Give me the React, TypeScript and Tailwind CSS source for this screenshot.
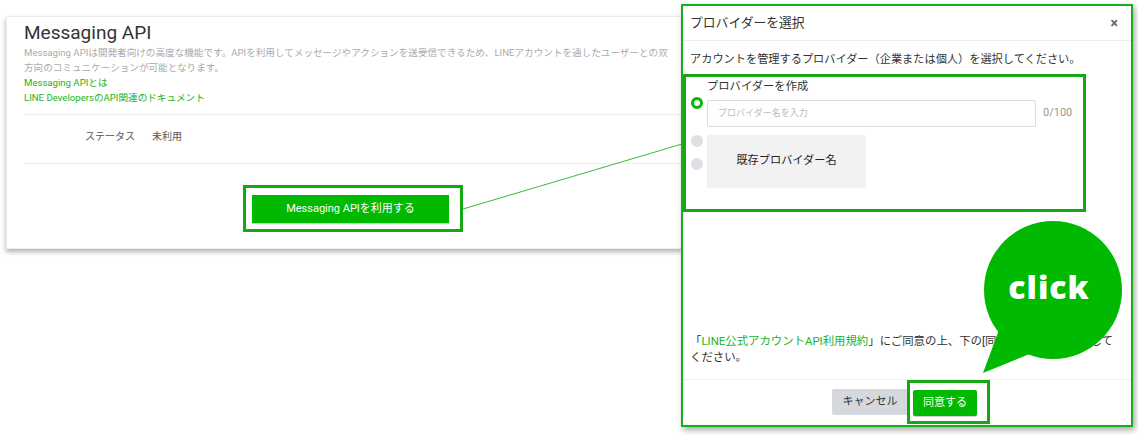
const green = 'bg-[#00b900]';

const MessagingCard = () => (
  <div className="ml-[6px] mt-[16px] h-[233px] w-[676px] border border-[#ececec] bg-white shadow-[0_3px_5px_rgba(0,0,0,0.3)]">
    <div className="pl-[17px] pt-[5px]">
      <h2 className="text-[19px] leading-[22px] text-[#333]">Messaging API</h2>
      <p className="mt-[1px] whitespace-nowrap text-[9.6px] leading-[15px] text-[#aaa]">
        Messaging APIは開発者向けの高度な機能です。APIを利用してメッセージやアクションを送受信できるため、LINEアカウントを通したユーザーとの双
        <br />
        方向のコミュニケーションが可能となります。
      </p>
      <div className="text-[9.6px] leading-[15px] text-[#22b322]">
        <div>Messaging APIとは</div>
        <div>LINE DevelopersのAPI関連のドキュメント</div>
      </div>
      <div className="mt-[9px] border-t border-[#eeeeee]">
        <div className="flex pb-[19px] pl-[61px] pt-[15px] text-[10px] leading-[14px] text-[#555]">
          <span className="w-[67px]">ステータス</span>
          <span>未利用</span>
        </div>
      </div>
      <div className="border-t border-[#eeeeee]">
        <div className="ml-[219px] mt-[21px] flex h-[47px] w-[220px] border-[3px] border-[#12a912] pl-[6px] pt-[7px]">
          <button className={`h-[28px] w-[197px] ${green} text-[11px] text-white shadow-[0_1px_1px_rgba(0,0,0,0.2)]`}>
            Messaging APIを利用する
          </button>
        </div>
      </div>
    </div>
  </div>
);

const Radio = ({ on }: { on?: boolean }) =>
  on ? (
    <span className="block h-[12px] w-[12px] rounded-full border-[3px] border-[#00b900] bg-white" />
  ) : (
    <span className="block h-[12px] w-[12px] rounded-full bg-[#dcdfe4]" />
  );

const ProviderModal = () => (
  <div className="absolute left-[681px] top-[4px] flex h-[423px] w-[452px] flex-col border-2 border-[#19ae19] bg-white shadow-[2px_3px_6px_rgba(0,0,0,0.35)]">
    <div className="flex h-[35px] items-center justify-between border-b border-[#eeeeee] pl-[7px] pr-[13px]">
      <span className="text-[12.8px] text-[#333]">プロバイダーを選択</span>
      <span className="text-[14px] font-bold text-[#666]">×</span>
    </div>
    <p className="pl-[7px] pt-[11px] text-[11.2px] leading-[16px] text-[#333]">
      アカウントを管理するプロバイダー（企業または個人）を選択してください。
    </p>
    <div className="mt-[6px] h-[138px] w-[403px] border-[3px] border-[#12a912] pl-[5px] pt-[3px]">
      <div className="pl-[16px] text-[11.3px] leading-[14px] text-[#333]">プロバイダーを作成</div>
      <div className="mt-[6px] flex items-start">
        <div className="mt-[-3px]">
          <Radio on />
        </div>
        <div className="ml-[4px] flex h-[27px] w-[329px] items-center rounded-[2px] border border-[#dddddd] pl-[10px] text-[9px] text-[#bbb]">
          プロバイダー名を入力
        </div>
        <span className="ml-[7px] mt-[6px] text-[11px] leading-[14px] text-[#999]">0/100</span>
      </div>
      <div className="mt-[8px] flex items-start">
        <div className="flex flex-col gap-[11px]">
          <Radio />
          <Radio />
        </div>
        <div className="ml-[4px] flex h-[53px] w-[159px] items-center justify-center bg-[#f2f2f2] text-[11.2px] text-[#222]">
          既存プロバイダー名
        </div>
      </div>
    </div>
    <p className="mt-[121px] whitespace-nowrap pl-[7px] text-[11.4px] leading-[16px] text-[#333]">
      「<span className="text-[#22b322]">LINE公式アカウントAPI利用規約</span>」にご同意の上、下の[同意する]をクリックして
      <br />
      ください。
    </p>
    <div className="mt-[14px] flex flex-1 justify-center border-t border-[#f0f0f0] pl-[8px]">
      <button className="mt-[9px] h-[26px] w-[76px] rounded-[2px] bg-[#d5d9de] text-[11px] text-[#333]">
        キャンセル
      </button>
      <div className="ml-[-1px] h-[44px] w-[83px] border-[3px] border-[#12a912] pl-[3px] pt-[6px]">
        <button className={`h-[26px] w-[64px] rounded-[2px] ${green} text-[11px] text-white shadow-[0_1px_1px_rgba(0,0,0,0.2)]`}>
          同意する
        </button>
      </div>
    </div>
  </div>
);

const ClickBubble = () => (
  <svg className="absolute left-[975px] top-[215px]" width="160" height="165" viewBox="0 0 160 165">
    <polygon points="25,112 8,158 62,136" fill="#00b900" />
    <circle cx="78" cy="75" r="69" fill="#00b900" />
    <text
      x="74"
      y="84"
      textAnchor="middle"
      fill="#fff"
      fontSize="32"
      fontWeight="800"
      letterSpacing="1"
      fontFamily="'Open Sans', Lato, sans-serif"
    >
      click
    </text>
  </svg>
);

export default function App() {
  return (
    <div className="relative h-[435px] w-[1138px] overflow-hidden bg-white font-['Roboto','Noto_Sans_CJK_JP',sans-serif]">
      <MessagingCard />
      <svg className="absolute left-0 top-0" width="1138" height="435">
        <line x1="463" y1="209" x2="682" y2="144" stroke="#3cb83c" strokeWidth="1" />
      </svg>
      <ProviderModal />
      <ClickBubble />
    </div>
  );
}
